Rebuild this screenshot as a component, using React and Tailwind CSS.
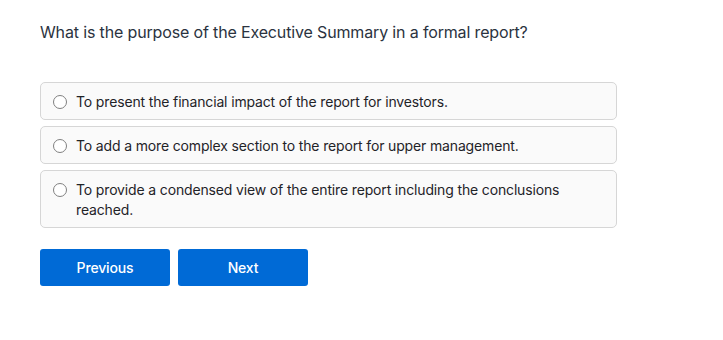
import React, { useState } from 'react';

const options = [
  'To present the financial impact of the report for investors.',
  'To add a more complex section to the report for upper management.',
  'To provide a condensed view of the entire report including the conclusions reached.',
];

export default function App() {
  const [selected, setSelected] = useState(null);

  return (
    <div className="min-h-[340px] w-[723px] bg-white pl-10 pt-5 tracking-[-0.15px]" style={{ fontFamily: 'Inter, "Noto Sans", sans-serif' }}>
      {/* Question */}
      <h2 className="text-[16px] leading-6 text-[#2b3340] font-normal">
        What is the purpose of the Executive Summary in a formal report?
      </h2>

      {/* Answer choices */}
      <div className="mt-[38px] flex w-[577px] flex-col gap-[6px]">
        {options.map((opt, idx) => (
          <label
            key={idx}
            className="flex cursor-pointer items-start rounded-[5px] border border-[#d6d6d6] bg-[#fafafa] pt-[9px] pb-[7px] pl-3 pr-12"
          >
            <span className="flex h-5 items-center">
              <input
                type="radio"
                name="answer"
                checked={selected === idx}
                onChange={() => setSelected(idx)}
                className="m-0 h-[14px] w-[14px] appearance-none rounded-full border border-[#808080] bg-white"
              />
            </span>
            <span className="ml-[9px] text-[14px] leading-5 text-[#1f2328]">{opt}</span>
          </label>
        ))}
      </div>

      {/* Navigation */}
      <div className="mt-[21px] flex gap-2">
        <button className="h-[37px] w-[130px] rounded-[3px] bg-[#006ad6] text-[14px] font-medium text-white">
          Previous
        </button>
        <button className="h-[37px] w-[130px] rounded-[3px] bg-[#006ad6] text-[14px] font-medium text-white">
          Next
        </button>
      </div>
    </div>
  );
}
